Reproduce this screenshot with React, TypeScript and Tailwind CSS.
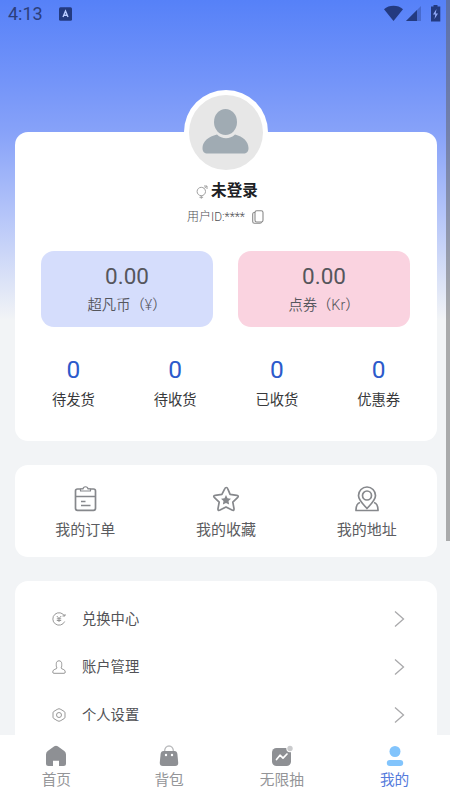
import type { ReactNode } from "react";
import { clsx } from "clsx";

const stats = [
  { label: "待发货", value: 0 },
  { label: "待收货", value: 0 },
  { label: "已收货", value: 0 },
  { label: "优惠券", value: 0 },
];

function StatusBar() {
  return (
    <div className="flex h-7 items-center justify-between pl-2 pr-[10px] text-[#233a80]">
      <div className="flex items-center gap-[16px]">
        <span className="text-[18px] leading-7 text-[#2b3e7c]">4:13</span>
        <svg width="13" height="14" viewBox="0 0 13 14">
          <rect width="13" height="13.4" y=".3" rx="1.5" fill="currentColor" />
          <path d="M4 10 6.5 4 9 10M5 8.2h3" fill="none" stroke="#b9cbff" strokeWidth="1.4" />
        </svg>
      </div>
      <svg width="57" height="18" viewBox="0 0 57 18" fill="currentColor">
        <path d="M0 4.2C5-.4 14-.4 19 4.2L9.500 16z" />
        <path d="M22 16 37 1v15z" opacity=".35" />
        <path d="M22 16 33 5v11z" />
        <path d="M49.500 1.500V0h4v1.500h2.800v15h-9.300v-15z" />
        <path d="m52.500 4-3.500 5.500h2.300l-.8 4.500 3.500-5.500h-2.300z" fill="#91aaf9" />
      </svg>
    </div>
  );
}

function Balance({ label, className }: { label: string; className: string }) {
  return (
    <div className={clsx("flex h-[76px] w-[172px] flex-col items-center rounded-[13px] text-[#55565c]", className)}>
      <span className="mt-[11px] text-[22.500px] leading-[28px]">0.00</span>
      <span className="mt-[4px] text-[14.300px] font-[350] leading-[22px]">{label}</span>
    </div>
  );
}

function Shortcut({ label, children }: { label: string; children: ReactNode }) {
  return (
    <div className="flex flex-1 flex-col items-center pt-5">
      <svg width="28" height="28" viewBox="0 0 28 28" fill="none" stroke="#86888c" strokeWidth="1.7" strokeLinejoin="round">
        {children}
      </svg>
      <span className="mt-[6px] text-[15px] leading-[22px] text-[#5b5c60]">{label}</span>
    </div>
  );
}

function MenuRow({ label, children }: { label: string; children: ReactNode }) {
  return (
    <div className="flex h-[48px] items-center pl-[37px] pr-[32px]">
      <svg width="14" height="14" viewBox="0 0 14 14" fill="none" stroke="#8c8c8c" strokeWidth=".9">
        {children}
      </svg>
      <span className="ml-[16px] flex-1 text-[14.300px] leading-[22px] text-[#515256]">{label}</span>
      <svg width="11" height="18" viewBox="0 0 11 18" fill="none" stroke="#a9a9ab" strokeWidth="1.3">
        <path d="m1 1.500 8.500 7.500L1 16.500" />
      </svg>
    </div>
  );
}

function Tab({ label, active, children }: { label: string; active?: boolean; children: ReactNode }) {
  return (
    <div className={clsx("flex flex-1 flex-col items-center pt-[9px]", active ? "text-[#557bdc]" : "text-[#949598]")}>
      <svg width="24" height="24" viewBox="0 0 24 24" fill="#8e9094">
        {children}
      </svg>
      <span className="mt-px text-[14.700px] leading-[22px]">{label}</span>
    </div>
  );
}

export default function App() {
  return (
    <main className="relative h-[796px] w-[450px] overflow-hidden bg-[#f2f4f6] font-[Roboto,'Noto_Sans_CJK_SC',sans-serif]">
      <div className="flex h-full w-[451px] flex-col bg-[linear-gradient(180deg,#5681f8_0px,#7394f9_80px,#87a2f9_132px,#b5c5f9_215px,#f2f4f6_320px)]">
        <StatusBar />

        <section className="ml-[15px] mt-[104px] flex h-[309px] w-[422px] shrink-0 flex-col items-center rounded-[13px] bg-white">
          <div className="-mt-[42px] flex h-[84px] w-[84px] shrink-0 items-center justify-center rounded-full bg-white">
            <svg width="74" height="75" viewBox="0 0 74 75">
              <ellipse cx="37" cy="37.500" rx="37" ry="37.500" fill="#e7e7e7" />
              <ellipse cx="36.500" cy="27" rx="11.500" ry="13" fill="#a0abb3" />
              <path
                d="M28 39.500c5 5 13 5 18 0 8 2 13.500 7 13.500 13.500 0 4-2 5.500-5 5.500H18.500c-3 0-5-1.500-5-5.500 0-6.500 6-11.500 14.500-13.500z"
                fill="#a0abb3"
              />
            </svg>
          </div>
          <div className="mt-[6px] flex items-center gap-[3px] pl-[2px]">
            <svg width="12" height="14" viewBox="0 0 12 14" fill="none" stroke="#a0a0a0" strokeWidth="1">
              <circle cx="5.300" cy="6.500" r="4.200" />
              <path d="m8.300 3.500 2.500-2.500M8 1h3v3M5.300 10.700v3M3.500 12.300h3.600" />
            </svg>
            <span className="text-[15.600px] font-bold leading-[23px] text-[#202124]">未登录</span>
          </div>
          <div className="mt-[5px] flex items-center gap-[7px] pr-px text-[#4f5054]">
            <span className="text-[12px] font-light leading-[18px]">用户ID:****</span>
            <svg width="12" height="14" viewBox="0 0 12 14" fill="none" stroke="#8a8a8a" strokeWidth="1.100">
              <rect x="3" y=".7" width="8" height="11.300" rx="1.800" />
              <path d="M3 2.500H2Q.7 2.700.7 4v7.500Q.7 13.300 2.500 13.300H8q1.300 0 1.600-1.300" />
            </svg>
          </div>

          <div className="mt-[24.500px] flex gap-[25px] pr-px">
            <Balance label="超凡币（¥）" className="bg-[#d5ddfc]" />
            <Balance label="点券（Kr）" className="bg-[#fad3e0]" />
          </div>

          <div className="mt-[28px] flex w-[407px]">
            {stats.map((s) => (
              <div key={s.label} className="flex flex-1 flex-col items-center">
                <span className="text-[24.500px] leading-[30px] text-[#2c5acb]">{s.value}</span>
                <span className="mt-[4px] text-[14.300px] leading-[22px] text-[#38393b]">{s.label}</span>
              </div>
            ))}
          </div>
        </section>

        <section className="ml-[15px] mt-[24px] flex h-[92px] w-[422px] shrink-0 rounded-[13px] bg-white">
          <Shortcut label="我的订单">
            <rect x="4.500" y="4" width="20" height="21.300" rx="2" />
            <path d="M4.500 11.500h20M10 16.500h4.500M10 20.500h9.500" />
            <path d="M9.500 6V4H12c.3-3 4.700-3 5 0h2.500v2z" fill="white" strokeWidth="1.200" />
          </Shortcut>
          <Shortcut label="我的收藏">
            <path d="M14.500 2.500q.8 0 1.300 1.300l2.300 5.500 6.700 1q2.500.5.700 2.300l-4.700 4.500 1.200 6.600q.2 2.500-2 1.400L14 22l-6 3.100q-2.300 1.100-2-1.400l1.200-6.600-4.700-4.500q-1.800-1.800.7-2.300l6.700-1 2.800-5.500q.5-1.300 1.800-1.300z" />
            <path d="m14 10 1.500 3.200 3.500.5-2.500 2.400.6 3.500-3.100-1.700-3.100 1.700.6-3.500L9 13.700l3.500-.5z" fill="#86888c" stroke="none" />
          </Shortcut>
          <Shortcut label="我的地址">
            <path d="M14 23.500C9 18 5.500 15 5.500 10.500a8.500 8.500 0 0 1 17 0C22.500 15 19 18 14 23.500z" />
            <circle cx="14" cy="10.500" r="4.500" />
            <path d="M7 17.500q-4 1-4 8h22q0-7-4-8" />
          </Shortcut>
        </section>

        <section className="ml-[15px] mt-[24px] min-h-0 w-[422px] flex-1 overflow-hidden rounded-t-[13px] bg-white pt-[14px]">
          <MenuRow label="兑换中心">
            <path d="M12.500 4A6.200 6.200 0 1 0 12.700 9.500M10.500 4h2.500v-2M4.800 4 7 6.500 9.200 4M7 6.500V10M4.800 6.800h4.400M4.800 8.500h4.400" />
          </MenuRow>
          <MenuRow label="账户管理">
            <path d="M5 8C4 6.500 4.300 5 4.300 3.500 4.300-.1 9.700-.1 9.700 3.500 9.700 5 10 6.500 9 8c0 1.300 4.300.8 4.300 4q0 1.300-1.300 1.300H2Q.7 13.300.7 12C.7 8.800 5 9.300 5 8z" />
          </MenuRow>
          <MenuRow label="个人设置">
            <path d="M7 .7q1 0 5.300 2.800.7.500.7 1.500v4q0 1-.7 1.500Q8 13.300 7 13.300T1.700 10.500Q1 10 1 9V5q0-1 .7-1.500Q6 .7 7 .7z" />
            <circle cx="7" cy="7" r="2.500" />
          </MenuRow>
        </section>

        <nav className="flex h-[61px] shrink-0 bg-white">
          <Tab label="首页">
            <path d="M10.300 2.300q1.700-1.300 3.400 0l6.600 4.800Q22 8.500 22 10.500v9q0 2.500-2.500 2.500H15v-5.300H9V22H4.500Q2 22 2 19.500v-9q0-2 1.700-3.400z" />
          </Tab>
          <Tab label="背包">
            <path d="M7.500 8C7.500 0 16.500 0 16.500 8" fill="none" stroke="#bcbdbf" strokeWidth="1.500" />
            <path d="M6.500 7h11Q20 7 20.400 10l.8 8.500q.3 3.500-3 3.500H5.800q-3.300 0-3-3.500L3.600 10Q4 7 6.500 7z" />
            <circle cx="9" cy="11" r="1.200" fill="white" />
            <circle cx="15" cy="11" r="1.200" fill="white" />
          </Tab>
          <Tab label="无限抽">
            <rect x="2" y="4" width="19" height="18" rx="4.500" />
            <circle cx="20" cy="4.500" r="3.700" fill="white" />
            <circle cx="20" cy="4.500" r="2.700" fill="#cacbcd" />
            <path d="m6.500 15.500 3.500-4.300 3 3 4-4.200" fill="none" stroke="white" strokeWidth="1.700" strokeLinecap="round" strokeLinejoin="round" />
          </Tab>
          <Tab label="我的" active>
            <circle cx="12" cy="7.500" r="5.500" fill="#82c4fc" />
            <rect x="3.800" y="16" width="16.400" height="6" rx="3" fill="#82c4fc" />
          </Tab>
        </nav>
      </div>

      {/* scrollbar */}
      <div className="absolute right-0 top-0 h-[541px] w-[4px] bg-[#606060]/50" />
    </main>
  );
}
